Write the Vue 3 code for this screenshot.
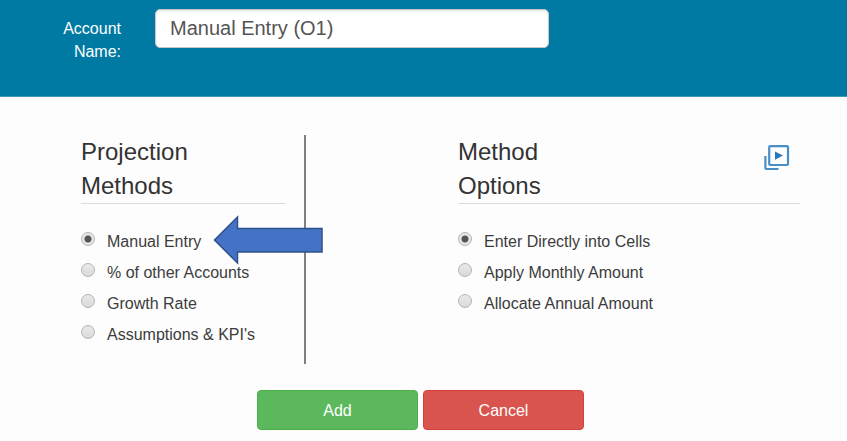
<script setup>
import { ref } from 'vue'

const accountName = ref('Manual Entry (O1)')
const method = ref('manual')
const option = ref('cells')

const methods = [
  { value: 'manual', label: 'Manual Entry' },
  { value: 'percent', label: '% of other Accounts' },
  { value: 'growth', label: 'Growth Rate' },
  { value: 'kpi', label: "Assumptions & KPI's" },
]
const options = [
  { value: 'cells', label: 'Enter Directly into Cells' },
  { value: 'monthly', label: 'Apply Monthly Amount' },
  { value: 'annual', label: 'Allocate Annual Amount' },
]
</script>

<template>
  <form class="page" @submit.prevent>
    <header class="top">
      <label class="top-label" for="account-name">Account Name:</label>
      <input id="account-name" v-model="accountName" class="top-input" type="text" />
    </header>

    <main class="columns">
      <section class="methods">
        <h2 class="heading">Projection<br />Methods</h2>
        <div class="choices" role="radiogroup" aria-label="Projection Methods">
          <div v-for="m in methods" :key="m.value" class="choice">
            <input :id="'m-' + m.value" v-model="method" class="radio" type="radio" name="method" :value="m.value" />
            <label :for="'m-' + m.value">{{ m.label }}</label>
          </div>
          <svg class="arrow" width="112" height="52" viewBox="0 0 112 52" aria-hidden="true">
            <path d="M2.5 26 L25.5 3 V14.5 H110 V38 H25.5 V49 Z" fill="#4472c4" stroke="#2f528f" stroke-width="1.5" />
          </svg>
        </div>
      </section>

      <section class="options">
        <div class="heading heading-row">
          <h2 class="title">Method<br />Options</h2>
          <a class="video" href="#" aria-label="Play video">
            <svg width="28" height="28" viewBox="0 0 28 28" fill="none" stroke="#4a8ec6">
              <rect x="6.2" y="3.2" width="18.8" height="18.8" rx="1" stroke-width="2.2" />
              <path d="M2.4 13 V24.4 Q2.4 26 4 26 H15.5" stroke-width="2.2" />
              <path d="M12 8.5 L20 12.6 L12 16.7 Z" fill="#2878bd" stroke="none" />
            </svg>
          </a>
        </div>
        <div class="choices" role="radiogroup" aria-label="Method Options">
          <div v-for="o in options" :key="o.value" class="choice">
            <input :id="'o-' + o.value" v-model="option" class="radio" type="radio" name="option" :value="o.value" />
            <label :for="'o-' + o.value">{{ o.label }}</label>
          </div>
        </div>
      </section>
    </main>

    <footer class="actions">
      <button class="button add" type="submit">Add</button>
      <button class="button cancel" type="button">Cancel</button>
    </footer>
  </form>
</template>

<style>
body {
  background: #fdfdfd;
}
</style>

<style scoped>
.page {
  color: #3c3c3c;
  font-family: "Liberation Sans", Arial, sans-serif;
  font-size: 16px;
}
.top {
  display: flex;
  align-items: flex-start;
  gap: 34px;
  padding: 9px 32px 26px 41px;
  background: #0079a3;
  border-bottom: 1px solid #3e97b6;
}
.top-label {
  width: 80px;
  padding-top: 8px;
  padding-bottom: 7px;
  color: #fff;
  line-height: 23px;
  text-align: right;
}
.top-input {
  box-sizing: border-box;
  width: 51%;
  max-width: 394px;
  height: 39px;
  padding: 0 14px;
  border: 1px solid #c8c8c8;
  border-radius: 5px;
  background: #fff;
  box-shadow: inset 0 1px 2px rgba(0, 0, 0, 0.12);
  color: #555;
  font: inherit;
  font-size: 20px;
}
.columns {
  display: grid;
  grid-template-columns: 225fr 494fr;
  align-items: start;
  padding: 38px 47px 0 81px;
}
.methods {
  padding: 0 18px 14px 0;
  border-right: 2px solid #808080;
}
.options {
  padding-left: 152px;
}
.heading,
.title {
  margin: 0;
  color: #333;
  font-size: 24px;
  font-weight: 400;
  line-height: 34px;
}
.heading {
  border-bottom: 1px solid #dcdcdc;
}
.heading-row {
  display: flex;
  justify-content: space-between;
}
.video {
  height: 28px;
  padding: 8px 9px 0 0;
  line-height: 0;
}
.choices {
  position: relative;
  padding-top: 22px;
}
.choice {
  display: flex;
  align-items: center;
  gap: 12px;
  line-height: 31px;
  white-space: nowrap;
}
.radio {
  flex: none;
  appearance: none;
  width: 14px;
  height: 14px;
  margin: 0 0 6px;
  border: 1px solid #b4b4b4;
  border-radius: 50%;
  background: linear-gradient(#e9e9e9, #dadada);
}
.radio:checked {
  background: radial-gradient(circle, #555 0 3px, #e6e6e6 4px);
}
.arrow {
  position: absolute;
  top: 10px;
  left: 131px;
}
.actions {
  display: flex;
  justify-content: center;
  gap: 5px;
  padding: 26px 6px 11px 0;
}
.button {
  width: 161px;
  height: 40px;
  padding: 2px 0 0;
  border: 1px solid;
  border-radius: 4px;
  color: #fff;
  font: inherit;
}
.add {
  border-color: #4cae4c;
  background: #5cb85c;
}
.cancel {
  border-color: #d43f3a;
  background: #d9534f;
}
</style>
